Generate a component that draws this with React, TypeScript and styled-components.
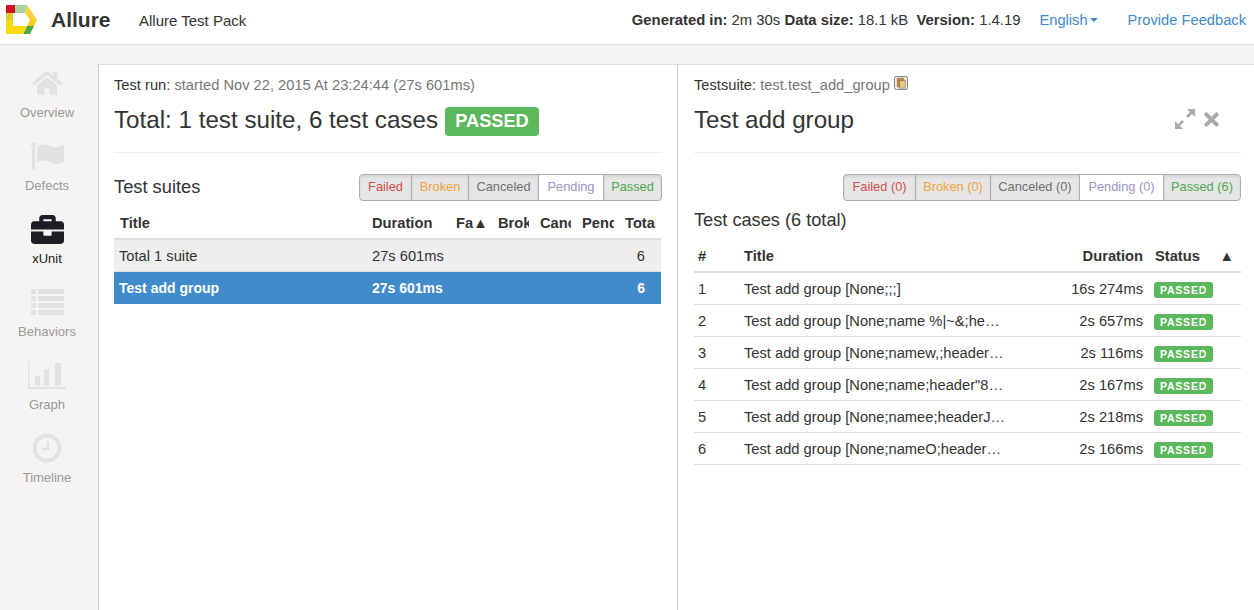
import { createGlobalStyle } from 'styled-components'
import styled from 'styled-components'
import { FaBriefcase, FaHome, FaTimes } from 'react-icons/fa'
import type { ReactNode } from 'react'

const Global = createGlobalStyle`
  html, body {
    margin: 0;
    height: 100%;
    overflow: hidden;
    background: #f5f4f3;
    font-family: "Liberation Sans", Arial, sans-serif;
    font-size: 14.7px;
    color: #333;
  }
`

const Page = styled.div`
  width: 1254px;
  height: 610px;
  display: flex;
  flex-direction: column;
`
const Header = styled.header`
  height: 45px;
  flex: none;
  box-sizing: border-box;
  display: flex;
  align-items: center;
  background: #fff;
  border-bottom: 1px solid #ddd;
  padding: 0 8px 4px 6px;
`
const Brand = styled.div`
  font-size: 21px;
  font-weight: 700;
  color: #333;
  margin-left: 13px;
  width: 88px;
`
const Project = styled.div`
  font-size: 15px;
  color: #333;
`
const Stats = styled.div`
  margin-left: auto;
  display: flex;
  font-size: 14.85px;
  color: #333;
  white-space: pre;
`
const StatLabel = styled.b`
  font-weight: 700;
`
const HeaderLink = styled.a<{ $gap: number }>`
  margin-left: ${(p) => p.$gap}px;
  color: #428bca;
  font-size: 14.7px;
  display: inline-flex;
  align-items: center;
`
const Caret = styled.span`
  width: 0;
  height: 0;
  margin-left: 2px;
  border-left: 4px solid transparent;
  border-right: 4px solid transparent;
  border-top: 4px solid #428bca;
`
const Body = styled.div`
  flex: 1;
  display: flex;
  min-height: 0;
`
const Side = styled.nav`
  width: 98px;
  flex: none;
  padding: 25px 4px 0 0;
  box-sizing: border-box;
`
const NavItem = styled.div<{ $active?: boolean }>`
  height: 73px;
  box-sizing: border-box;
  display: flex;
  flex-direction: column;
  align-items: center;
  color: ${(p) => (p.$active ? '#222' : '#999')};
  font-size: 13px;
`
const NavIcon = styled.div<{ $active?: boolean }>`
  height: 26px;
  margin-bottom: 9px;
  display: flex;
  align-items: center;
  justify-content: center;
  color: ${(p) => (p.$active ? '#1d1d24' : '#e2e2e2')};
`
const Panels = styled.main`
  flex: 1;
  margin-top: 19px;
  display: flex;
  background: #fff;
  border-top: 1px solid #ddd;
  border-left: 1px solid #ccc;
`
const Pane = styled.section<{ $divided?: boolean }>`
  box-sizing: border-box;
  width: ${(p) => (p.$divided ? '579px' : '576px')};
  padding: 12px ${(p) => (p.$divided ? '15px' : '13px')} 0 ${(p) => (p.$divided ? '15px' : '16px')};
  border-right: ${(p) => (p.$divided ? '1px solid #ccc' : 'none')};
`
const Crumb = styled.div`
  height: 17px;
  line-height: 17px;
  color: #333;
  display: flex;
  align-items: center;
`
const Muted = styled.span`
  color: #777;
  white-space: pre;
`
const TitleRow = styled.div`
  height: 59px;
  box-sizing: border-box;
  padding-top: 9px;
  border-bottom: 1px solid #eee;
  display: flex;
  align-items: flex-start;
`
const Title = styled.h2`
  margin: 0;
  font-size: 24.2px;
  line-height: 34px;
  font-weight: 400;
  color: #333;
`
const BigBadge = styled.span`
  margin: 4px 0 0 7px;
  height: 29px;
  width: 94px;
  border-radius: 4px;
  background: #5cb85c;
  color: #fff;
  font-size: 18.2px;
  font-weight: 700;
  display: flex;
  align-items: center;
  justify-content: center;
`
const Actions = styled.div`
  margin-left: auto;
  margin-right: 19px;
  margin-top: 5px;
  display: flex;
  align-items: center;
  gap: 5px;
  color: #aaa;
`
const ToolRow = styled.div`
  display: flex;
  align-items: center;
  justify-content: space-between;
  margin-top: 21px;
  height: 27px;
`
const SectionName = styled.div`
  font-size: 18.3px;
  color: #333;
  padding-bottom: 2px;
`
const Segments = styled.div`
  display: flex;
  height: 27px;
  margin-left: auto;
`
const Segment = styled.div<{ $color: string; $on?: boolean; $w: number }>`
  box-sizing: border-box;
  width: ${(p) => p.$w}px;
  border: 1px solid #adadad;
  margin-left: -1px;
  padding-bottom: 2px;
  display: flex;
  align-items: center;
  justify-content: center;
  font-size: 12.8px;
  white-space: nowrap;
  color: ${(p) => p.$color};
  background: ${(p) => (p.$on ? '#fff' : '#e6e6e6')};
  box-shadow: ${(p) => (p.$on ? 'none' : 'inset 0 2px 3px rgba(0,0,0,.08)')};
  &:first-child {
    border-radius: 4px 0 0 4px;
    margin-left: 0;
  }
  &:last-child {
    border-radius: 0 4px 4px 0;
  }
`
const SuiteGrid = styled.div<{ $kind: 'head' | 'total' | 'active' }>`
  display: grid;
  width: 547px;
  grid-template-columns: 252px 84px 42px 42px 42px 43px 42px;
  height: ${(p) => (p.$kind === 'head' ? '39px' : '32px')};
  padding-top: ${(p) => (p.$kind === 'head' ? '6px' : '0')};
  align-items: center;
  font-weight: ${(p) => (p.$kind === 'total' ? 400 : 700)};
  font-size: ${(p) => (p.$kind === 'active' ? '14px' : 'inherit')};
  background: ${(p) => (p.$kind === 'total' ? '#eee' : p.$kind === 'active' ? '#428bca' : 'transparent')};
  color: ${(p) => (p.$kind === 'active' ? '#fff' : '#333')};
  border-bottom: ${(p) => (p.$kind === 'head' ? '2px solid #ddd' : p.$kind === 'total' ? '1px solid #ddd' : 'none')};
  box-sizing: border-box;
`
const SuiteCell = styled.div<{ $end?: boolean }>`
  padding: 0 ${(p) => (p.$end ? '16px' : '5px')} 0 5px;
  text-align: ${(p) => (p.$end ? 'right' : 'left')};
  white-space: nowrap;
  &:nth-child(2) {
    padding-left: 6px;
  }
`
const SuiteHeadCell = styled.div`
  margin: 0 5px 0 6px;
  overflow: hidden;
  white-space: nowrap;
`
const CasesTitle = styled.div`
  margin-top: 9px;
  height: 20px;
  line-height: 20px;
  font-size: 18.2px;
  color: #333;
`
const CaseGrid = styled.div<{ $head?: boolean }>`
  display: grid;
  grid-template-columns: 46px 305px 98px 1fr;
  height: ${(p) => (p.$head ? '33px' : '32px')};
  margin-top: ${(p) => (p.$head ? '10px' : '0')};
  align-items: center;
  box-sizing: border-box;
  font-weight: ${(p) => (p.$head ? 700 : 400)};
  border-bottom: ${(p) => (p.$head ? '2px solid #ddd' : '1px solid #ddd')};
`
const CaseCell = styled.div<{ $end?: boolean }>`
  padding-left: 4px;
  text-align: ${(p) => (p.$end ? 'right' : 'left')};
  white-space: nowrap;
`
const StatusHead = styled.div`
  display: flex;
  justify-content: space-between;
  padding: 0 7px 0 12px;
`
const BadgeCell = styled.div`
  padding-top: 2px;
`
const SmallBadge = styled.span`
  display: inline-flex;
  margin-left: 11px;
  width: 59px;
  height: 16px;
  align-items: center;
  justify-content: center;
  border-radius: 3px;
  background: #5cb85c;
  color: #fff;
  font-size: 10.5px;
  font-weight: 700;
  letter-spacing: 0.8px;
`

function Logo() {
  return (
    <svg width="32" height="30" viewBox="0 0 32 30" style={{ flex: 'none' }}>
      <polygon points="0,0 9,0 9,8 0,8" fill="#d5121e" />
      <polygon points="9,0 21,0 19,8 9,8" fill="#a9d2a2" />
      <polygon points="21,0 31,15 24,15 19,8" fill="#f3d33c" />
      <polygon points="31,15 28,21 21,21 24,15" fill="#f2d21f" />
      <polygon points="28,21 24,29 17,29 21,21" fill="#4fa845" />
      <polygon points="0,21 21,21 17,29 0,29" fill="#fbdb0c" />
      <polygon points="0,8 7,8 7,15 0,15" fill="#d9cf2e" />
      <polygon points="0,15 7,15 7,21 0,21" fill="#f3d81a" />
    </svg>
  )
}

function CopyIcon() {
  return (
    <svg width="14" height="14" viewBox="0 0 15 15" style={{ marginLeft: 4, marginTop: -5 }}>
      <rect x="0.5" y="0.5" width="14" height="14" rx="2" fill="#eee" stroke="#777" />
      <rect x="3" y="2" width="8" height="10" fill="#b8894a" />
      <rect x="6" y="5" width="6" height="8" fill="#e8c98c" stroke="#8a6a35" strokeWidth="0.6" />
    </svg>
  )
}

function ExpandIcon() {
  return (
    <svg width="22" height="22" viewBox="0 0 22 22" fill="currentColor">
      <path d="M13 1h8v8l-3-3-4 4-2-2 4-4z" />
      <path d="M1 21v-8l3 3 4-4 2 2-4 4 3 3z" />
    </svg>
  )
}

function FlagIcon() {
  return (
    <svg width="33" height="28" viewBox="0 0 33 28" fill="currentColor">
      <rect x="1" y="2" width="3" height="26" rx="1.5" />
      <circle cx="2.5" cy="2.5" r="2.5" />
      <path d="M6 5c4-3 8-3 13-1s9 1 14-1v17c-5 3-10 2-14 0s-9-2-13 1z" />
    </svg>
  )
}

function ListIcon() {
  return (
    <svg width="33" height="26" viewBox="0 0 33 26" fill="currentColor">
      {[0, 7, 14, 21].map((y) => (
        <g key={y}>
          <rect x="0" y={y} width="5" height="5" />
          <rect x="7" y={y} width="26" height="5" />
        </g>
      ))}
    </svg>
  )
}

function GraphIcon() {
  return (
    <svg width="38" height="28" viewBox="0 0 38 28" fill="currentColor">
      <path d="M0 0h1.5v26H38v2H0z" />
      <rect x="7" y="15" width="5" height="10" />
      <rect x="16" y="8" width="5" height="17" />
      <rect x="27" y="2" width="6" height="23" />
    </svg>
  )
}

function ClockIcon() {
  return (
    <svg width="30" height="30" viewBox="0 0 30 30" fill="none" stroke="currentColor">
      <circle cx="15" cy="15" r="12.5" strokeWidth="4" />
      <path d="M16 8v8h-6" strokeWidth="2.4" />
    </svg>
  )
}

const NAV: { label: string; icon: ReactNode; active?: boolean }[] = [
  { label: 'Overview', icon: <FaHome size={30} /> },
  { label: 'Defects', icon: <FlagIcon /> },
  { label: 'xUnit', icon: <FaBriefcase size={33} />, active: true },
  { label: 'Behaviors', icon: <ListIcon /> },
  { label: 'Graph', icon: <GraphIcon /> },
  { label: 'Timeline', icon: <ClockIcon /> },
]

const SUITE_FILTERS = [
  { text: 'Failed', color: '#d0504c', w: 53 },
  { text: 'Broken', color: '#eea23f', w: 58 },
  { text: 'Canceled', color: '#6f6f6f', w: 71 },
  { text: 'Pending', color: '#9a94c4', w: 66, on: true },
  { text: 'Passed', color: '#4fa64f', w: 59 },
]
const CASE_FILTERS = [
  { text: 'Failed (0)', color: '#d0504c', w: 73 },
  { text: 'Broken (0)', color: '#eea23f', w: 76 },
  { text: 'Canceled (0)', color: '#6f6f6f', w: 90 },
  { text: 'Pending (0)', color: '#9a94c4', w: 85, on: true },
  { text: 'Passed (6)', color: '#4fa64f', w: 78 },
]
const CASES = [
  ['Test add group [None;;;]', '16s 274ms'],
  ['Test add group [None;name %|~&;he…', '2s 657ms'],
  ['Test add group [None;namew,;header…', '2s 116ms'],
  ['Test add group [None;name;header"8…', '2s 167ms'],
  ['Test add group [None;namee;headerJ…', '2s 218ms'],
  ['Test add group [None;nameO;header…', '2s 166ms'],
]
const SUITE_HEADS = ['Title', 'Duration', 'Fa▲', 'Broken', 'Canceled', 'Pending', 'Total']

export default function App() {
  return (
    <Page>
      <Global />
      <Header>
        <Logo />
        <Brand>Allure</Brand>
        <Project>Allure Test Pack</Project>
        <Stats>
          <StatLabel>Generated in:</StatLabel> 2m 30s <StatLabel>Data size:</StatLabel> 18.1 kB{'  '}
          <StatLabel>Version:</StatLabel> 1.4.19
        </Stats>
        <HeaderLink $gap={19}>
          English
          <Caret />
        </HeaderLink>
        <HeaderLink $gap={30}>Provide Feedback</HeaderLink>
      </Header>
      <Body>
        <Side>
          {NAV.map((n) => (
            <NavItem key={n.label} $active={n.active}>
              <NavIcon $active={n.active}>{n.icon}</NavIcon>
              {n.label}
            </NavItem>
          ))}
        </Side>
        <Panels>
          <Pane $divided>
            <Crumb>
              Test run:&nbsp;<Muted>started Nov 22, 2015 At 23:24:44 (27s 601ms)</Muted>
            </Crumb>
            <TitleRow>
              <Title>Total: 1 test suite, 6 test cases</Title>
              <BigBadge>PASSED</BigBadge>
            </TitleRow>
            <ToolRow>
              <SectionName>Test suites</SectionName>
              <Segments>
                {SUITE_FILTERS.map((f) => (
                  <Segment key={f.text} $color={f.color} $on={f.on} $w={f.w}>
                    {f.text}
                  </Segment>
                ))}
              </Segments>
            </ToolRow>
            <SuiteGrid $kind="head">
              {SUITE_HEADS.map((h) => (
                <SuiteHeadCell key={h}>{h}</SuiteHeadCell>
              ))}
            </SuiteGrid>
            <SuiteGrid $kind="total">
              <SuiteCell>Total 1 suite</SuiteCell>
              <SuiteCell>27s 601ms</SuiteCell>
              <SuiteCell />
              <SuiteCell />
              <SuiteCell />
              <SuiteCell />
              <SuiteCell $end>6</SuiteCell>
            </SuiteGrid>
            <SuiteGrid $kind="active">
              <SuiteCell>Test add group</SuiteCell>
              <SuiteCell>27s 601ms</SuiteCell>
              <SuiteCell />
              <SuiteCell />
              <SuiteCell />
              <SuiteCell />
              <SuiteCell $end>6</SuiteCell>
            </SuiteGrid>
          </Pane>
          <Pane>
            <Crumb>
              Testsuite:&nbsp;<Muted>test.test_add_group</Muted>
              <CopyIcon />
            </Crumb>
            <TitleRow>
              <Title>Test add group</Title>
              <Actions>
                <ExpandIcon />
                <FaTimes size={21} />
              </Actions>
            </TitleRow>
            <ToolRow>
              <Segments>
                {CASE_FILTERS.map((f) => (
                  <Segment key={f.text} $color={f.color} $on={f.on} $w={f.w}>
                    {f.text}
                  </Segment>
                ))}
              </Segments>
            </ToolRow>
            <CasesTitle>Test cases (6 total)</CasesTitle>
            <CaseGrid $head>
              <CaseCell>#</CaseCell>
              <CaseCell>Title</CaseCell>
              <CaseCell $end>Duration</CaseCell>
              <StatusHead>
                <span>Status</span>
                <span>▲</span>
              </StatusHead>
            </CaseGrid>
            {CASES.map(([name, time], i) => (
              <CaseGrid key={i}>
                <CaseCell>{i + 1}</CaseCell>
                <CaseCell>{name}</CaseCell>
                <CaseCell $end>{time}</CaseCell>
                <BadgeCell>
                  <SmallBadge>PASSED</SmallBadge>
                </BadgeCell>
              </CaseGrid>
            ))}
          </Pane>
        </Panels>
      </Body>
    </Page>
  )
}
